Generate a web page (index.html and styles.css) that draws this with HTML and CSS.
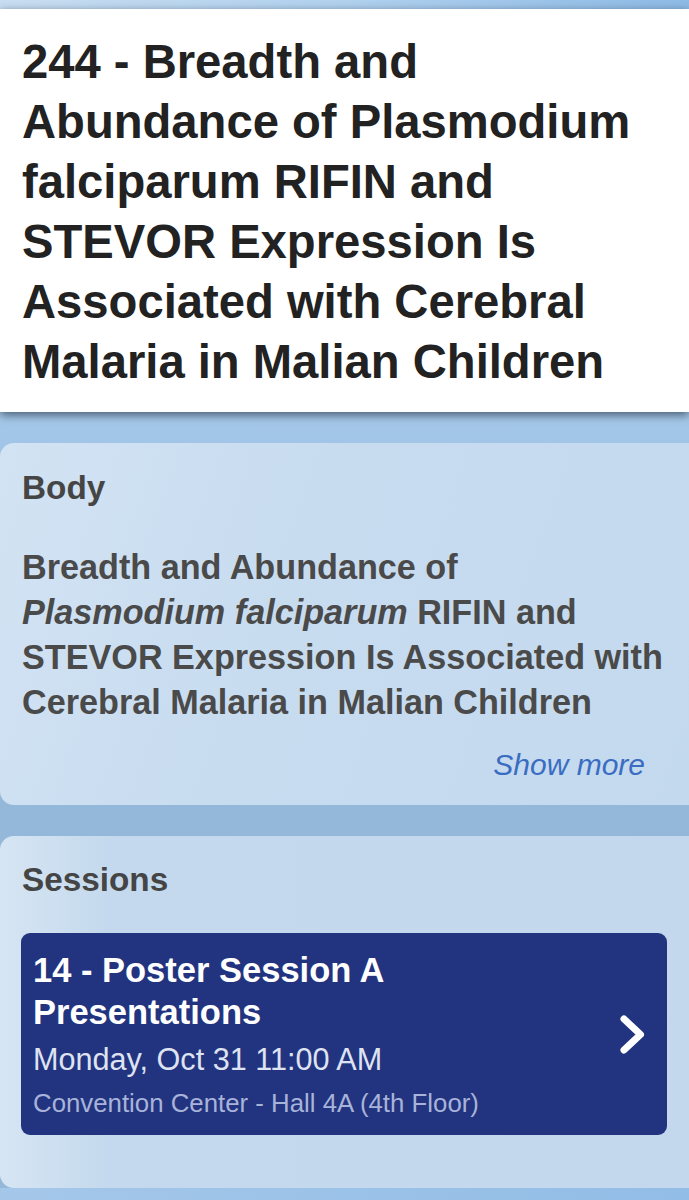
FILE: index.html
```html
<!DOCTYPE html>
<html lang="en">
<head>
<meta charset="utf-8">
<title>244 - Breadth and Abundance</title>
<link rel="stylesheet" href="styles.css">
</head>
<body>
<div class="topbar"></div>
<header class="header">
  <h1 class="title">244 - Breadth and<br>Abundance of Plasmodium<br>falciparum RIFIN and<br>STEVOR Expression Is<br>Associated with Cerebral<br>Malaria in Malian Children</h1>
</header>
<main class="content">
  <section class="card card-body">
    <h2 class="card-heading">Body</h2>
    <p class="body-text">Breadth and Abundance of<br><i>Plasmodium falciparum</i> RIFIN and<br>STEVOR Expression Is Associated with<br>Cerebral Malaria in Malian Children</p>
    <div class="more-row"><a class="show-more">Show more</a></div>
  </section>
  <section class="card card-sessions">
    <h2 class="card-heading">Sessions</h2>
    <div class="session">
      <div class="session-info">
        <div class="session-title">14 - Poster Session A<br>Presentations</div>
        <div class="session-time">Monday, Oct 31 11:00 AM</div>
        <div class="session-place">Convention Center - Hall 4A (4th Floor)</div>
      </div>
      <svg class="chevron" width="25" height="39" viewBox="0 0 25 39" aria-hidden="true">
        <path d="M4 4 L20.5 19.5 L4 35" fill="none" stroke="#ffffff" stroke-width="7" stroke-linecap="round" stroke-linejoin="round"/>
      </svg>
    </div>
  </section>
</main>
</body>
</html>
```

FILE: styles.css
```css
html, body {
  margin: 0;
  padding: 0;
}
body {
  width: 689px;
  min-height: 1200px;
  overflow: hidden;
  font-family: "Liberation Sans", Arial, sans-serif;
  background: linear-gradient(120deg, #b4d1ee 0%, #a6c8ea 45%, #92bde6 100%);
}
.topbar {
  height: 9px;
  background: linear-gradient(90deg, #c9def2 0%, #b2d2ef 50%, #8ebbe6 100%);
}
.header {
  position: relative;
  z-index: 1;
  background: #ffffff;
  padding: 23px 20px 20px 22px;
  box-shadow: 0 3px 9px rgba(40, 55, 75, 0.75);
}
.title {
  margin: 0;
  font-size: 47.2px;
  line-height: 60px;
  font-weight: 700;
  color: #222222;
}
.content {
  padding-top: 31px;
  background: linear-gradient(180deg, #a6c9ea 0px, #a0c4e6 40px, #93b8da 60px, #93b8da 100%);
}
.card {
  margin-right: -20px;
  border-radius: 14px 0 0 14px;
  background: linear-gradient(110deg, #d2e3f3 0%, #c8dcf0 40%, #c3d9ee 100%);
  padding-left: 22px;
}
.card-body {
  padding-top: 25px;
  padding-bottom: 20px;
  margin-bottom: 31px;
}
.card-sessions {
  padding-top: 24px;
  padding-bottom: 53px;
  margin-bottom: 12px;
  background: linear-gradient(90deg, #d6e5f3 0px, #c4d9ed 110px, #c3d8ec 100%);
}
.card-heading {
  margin: 0;
  font-size: 33.3px;
  line-height: 40px;
  font-weight: 700;
  color: #454545;
}
.body-text {
  margin: 37px 0 0 0;
  font-size: 34.2px;
  line-height: 45px;
  font-weight: 700;
  color: #4a4a4a;
}
.body-text i {
  font-style: italic;
}
.more-row {
  display: flex;
  justify-content: flex-end;
  padding-right: 64px;
  margin-top: 20px;
}
.show-more {
  font-size: 30px;
  line-height: 40px;
  font-style: italic;
  color: #3a6dc1;
}
.session {
  margin-top: 33px;
  width: 646px;
  box-sizing: border-box;
  margin-left: -1px;
  display: flex;
  align-items: center;
  justify-content: space-between;
  background: #22347f;
  border-radius: 9px;
  padding: 16px 22px 15px 12px;
}
.session-info {
  display: flex;
  flex-direction: column;
}
.session-title {
  font-size: 34.5px;
  line-height: 42px;
  font-weight: 700;
  color: #ffffff;
}
.session-time {
  margin-top: 6px;
  font-size: 30.6px;
  line-height: 40px;
  color: #dfe3f1;
}
.session-place {
  margin-top: 7px;
  font-size: 25.8px;
  line-height: 34px;
  color: #a8b3d9;
}
.chevron {
  flex: none;
  display: block;
  margin-top: 0;
}
```
